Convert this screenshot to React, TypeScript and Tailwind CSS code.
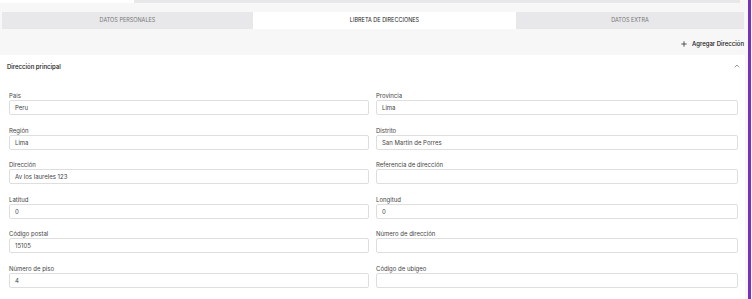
import { Plus, ChevronUp } from "lucide-react";

const FIELDS: { label: string; value: string }[] = [
  { label: "País", value: "Peru" },
  { label: "Provincia", value: "Lima" },
  { label: "Región", value: "Lima" },
  { label: "Distrito", value: "San Martin de Porres" },
  { label: "Dirección", value: "Av los laureles 123" },
  { label: "Referencia de dirección", value: "" },
  { label: "Latitud", value: "0" },
  { label: "Longitud", value: "0" },
  { label: "Código postal", value: "15105" },
  { label: "Número de dirección", value: "" },
  { label: "Número de piso", value: "4" },
  { label: "Código de ubigeo", value: "" },
];

const TABS = [
  { label: "DATOS PERSONALES", active: false, w: "w-[251px]" },
  { label: "LIBRETA DE DIRECCIONES", active: true, w: "w-[263px]" },
  { label: "DATOS EXTRA", active: false, w: "flex-1" },
];

export default function App() {
  return (
    <div className="w-[752px] h-[299px] overflow-hidden flex bg-white font-['Inter',sans-serif]">
      <div className="w-[748px] bg-[#f7f7f7] flex flex-col">
        {/* top strip */}
        <div className="h-[3px] flex">
          <div className="w-[134px] bg-white" />
          <div className="flex-1 bg-[#e8e8ea] mr-[8px]" />
        </div>

        {/* tabs */}
        <div className="mt-[9px] h-[17px] flex pl-[2px] pr-[4px]">
          {TABS.map((t) => (
            <div
              key={t.label}
              className={`${t.w} flex items-center justify-center text-[5.5px] ${
                t.active ? "bg-white text-[#222]" : "bg-[#e8e8ea] text-[#777]"
              }`}
            >
              {t.label}
            </div>
          ))}
        </div>

        {/* add address */}
        <div className="h-[26px] flex items-center justify-end pr-[4px] pt-[3px]">
          <button className="flex items-center gap-[4px] text-[6px] font-medium text-[#111]">
            <Plus size={8} strokeWidth={2} className="text-[#111]" />
            Agregar Dirección
          </button>
        </div>

        {/* card */}
        <div className="flex-1 bg-white mr-[3px]">
          <div className="h-[22px] flex items-center justify-between pl-[7px] pr-[4px]">
            <span className="text-[6px] font-medium text-[#111]">Dirección principal</span>
            <ChevronUp size={8} strokeWidth={2} className="text-[#666]" />
          </div>
          <div className="grid grid-cols-[360px_362px] gap-x-[7px] gap-y-[11.5px] pl-[9px] pt-[15px]">
            {FIELDS.map((f) => (
              <div key={f.label} className="flex flex-col">
                <label className="h-[8px] leading-[8px] text-[6px] text-[#444]">{f.label}</label>
                <div className="h-[15px] border border-[#dedede] rounded-[2px] flex items-center pl-[5px] text-[6px] text-[#444]">
                  {f.value}
                </div>
              </div>
            ))}
          </div>
        </div>
      </div>
      <div className="w-[3px] bg-[#7b2fbe]" />
      <div className="flex-1 bg-white" />
    </div>
  );
}
